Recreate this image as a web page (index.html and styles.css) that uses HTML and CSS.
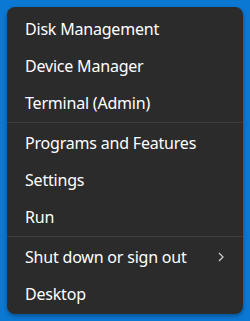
FILE: index.html
```html
<!DOCTYPE html>
<html>
<head>
    <link rel="stylesheet" href="styles.css">
</head>
<body>
    <div class="menu">
        <div class="group">
            <div class="item">Disk Management</div>
            <div class="item">Device Manager</div>
            <div class="item">Terminal (Admin)</div>
        </div>
        <div class="sep"></div>
        <div class="group">
            <div class="item">Programs and Features</div>
            <div class="item">Settings</div>
            <div class="item">Run</div>
        </div>
        <div class="sep"></div>
        <div class="group">
            <div class="item">
                <span>Shut down or sign out</span>
                <svg class="chevron" width="6" height="10" viewBox="0 0 6 10">
                    <path d="M1 1 L5 5 L1 9" fill="none" stroke="#d0d0d0" stroke-width="1.2"/>
                </svg>
            </div>
            <div class="item">Desktop</div>
        </div>
    </div>
</body>
</html>
```

FILE: styles.css
```css
body {
    margin: 0;
    background: #0b78d4;
    font-family: "Noto Sans", "Open Sans", sans-serif;
}

.menu {
    margin: 7px;
    width: 236px;
    padding: 3px 0 2px;
    box-sizing: border-box;
    background: #2b2b2b;
    border-radius: 8px;
    box-shadow: 0 2px 4px rgba(0, 0, 0, 0.35);
}

.item {
    height: 37px;
    display: flex;
    align-items: center;
    justify-content: space-between;
    padding: 1px 19px 0 18px;
    box-sizing: border-box;
    color: #ffffff;
    font-size: 16px;
    letter-spacing: -0.2px;
}

.sep {
    height: 1px;
    margin: 1px 0;
    background: #3e3e3e;
}
```
